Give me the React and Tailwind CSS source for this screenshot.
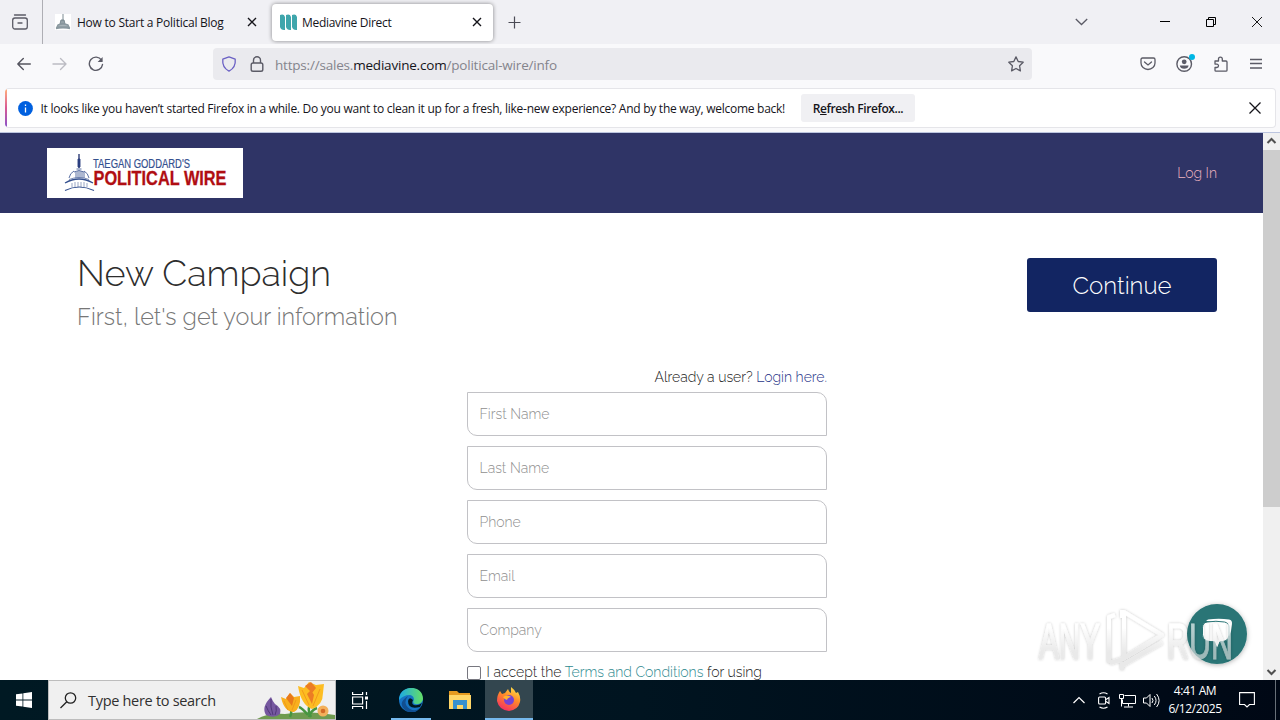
import React from "react";

const fields = ["First Name", "Last Name", "Phone", "Email", "Company"];

// capitol dome, used in the site logo
const Dome = () => (
  <g fill="none" stroke="#5a70a3" strokeWidth="1">
    <path d="M32 6V20" strokeWidth="1.300" stroke="#1d2c6b" />
    <path d="M31 11h2v8h-2z" fill="#2b3f80" strokeWidth="0.900" stroke="#2b3f80" />
    <path d="M29.500 21h5M27 24q5-3 10 0" />
    <path d="M29 24v6M31 23v7M33 23v7M35 23v7M37 24v6" strokeWidth="1" />
    <path d="M22 30q1-5 5-7M42 30q-1-5-5-7" />
    <path d="M18 35q14-8 28 0" stroke="#34508f" strokeWidth="1.300" />
    <path d="M22 31.500q10-4 20 0" strokeWidth="0.800" />
    <path d="M25 35v4M28 34v5M31 34v5M34 34v5M37 34v5M40 35v4" strokeWidth="0.900" stroke="#8c9bbd" />
    <path d="M18 42.500q14-7 29 0" stroke="#34508f" strokeWidth="1.200" />
  </g>
);

const SiteLogo = () => (
  <svg className="block h-[50px] w-[196px] bg-white" viewBox="0 0 196 50">
    <Dome />
    <text x="46" y="20" textLength="97" lengthAdjust="spacingAndGlyphs" fontFamily="Liberation Sans, sans-serif" fontSize="12.500" fill="#34508f" stroke="#34508f" strokeWidth="0.200">
      TAEGAN GODDARD'S
    </text>
    <text x="46.500" y="37" textLength="133" lengthAdjust="spacingAndGlyphs" fontFamily="Liberation Sans, sans-serif" fontSize="20" fontWeight="700" fill="#b00d12" stroke="#b00d12" strokeWidth="0.300">
      POLITICAL WIRE
    </text>
  </svg>
);

const TabBar = () => (
  <div className="flex h-11 items-center bg-[#f0f0f4]">
    <div className="flex h-full w-[43px] items-center justify-center border-r border-[#aeaeb4] pr-[2px]">
      <svg width="16" height="16" viewBox="0 0 16 16" fill="none" stroke="#5b5b66" strokeWidth="1.3" strokeLinecap="round">
        <path d="M2.500 1h11M6 9h4" />
        <rect x="0.700" y="4" width="14.600" height="11" rx="2.200" />
      </svg>
    </div>
    <div className="flex w-[229px] items-center pl-3">
      <svg width="16" height="16" viewBox="0 0 16 16" className="bg-white">
        <path d="M8 0v7M6 6h3l1 4H5z" stroke="#7c8b92" fill="#94a1a7" />
        <path d="M3 11q5-2 10 0l1 2H2zM1 14.500q7-2 14 0" stroke="#8a989f" strokeWidth="1.400" fill="#a9b4b9" />
      </svg>
      <span className="mt-[2px] ml-[6px] w-[170px] whitespace-nowrap text-[12px] tracking-[-0.24px]">How to Start a Political Blog</span>
      <svg width="10" height="10" viewBox="0 0 10 10" stroke="#15141a" strokeWidth="1.400">
        <path d="M1 1l8 8M9 1l-8 8" />
      </svg>
    </div>
    <div className="flex h-[37px] w-[221px] items-center rounded bg-white pl-2 shadow-[0_0_4px_rgba(0,0,0,0.45)]">
      <svg width="17" height="17" viewBox="0 0 17 17" fill="#3fa6ac">
        <path d="M0 1q4-1.500 5 2v13q-4 .5-5-3zM6 1q4-1.500 5 2v13q-4 .5-5-3zM12 1q4-1.500 5 2v13q-4 .5-5-3z" />
      </svg>
      <span className="mt-[2px] ml-[5px] w-[170px] whitespace-nowrap text-[12px] tracking-[-0.3px]">Mediavine Direct</span>
      <svg width="10" height="10" viewBox="0 0 10 10" stroke="#15141a" strokeWidth="1.400">
        <path d="M1 1l8 8M9 1l-8 8" />
      </svg>
    </div>
    <svg className="ml-[15px]" width="13" height="13" viewBox="0 0 13 13" stroke="#4b4b55" strokeWidth="1.200">
      <path d="M6.500 .5v12M.5 6.500h12" />
    </svg>
    <svg className="ml-auto" width="13" height="8" viewBox="0 0 13 8" fill="none" stroke="#5b5b66" strokeWidth="1.300">
      <path d="M.8 1l5.700 5.500L12.200 1" />
    </svg>
    <svg className="ml-[72px]" width="10" height="10" viewBox="0 0 10 10" stroke="#000">
      <path d="M0 4.500h10" />
    </svg>
    <svg className="ml-[36px]" width="10" height="10" viewBox="0 0 10 10" fill="none" stroke="#000">
      <path d="M.5 2.500h7v7h-7zM2.500 2.500v-2h7v7h-2" />
    </svg>
    <svg className="mr-[18px] ml-[36px]" width="10" height="10" viewBox="0 0 10 10" stroke="#000" strokeWidth="0.900">
      <path d="M0 0l10 10M10 0L0 10" />
    </svg>
  </div>
);

const Toolbar = () => (
  <div className="flex h-11 items-start bg-[#f9f9fb] pt-1">
    <div className="flex h-8 w-[213px] items-center gap-[21px] pl-[17px]">
      <svg width="14" height="14" viewBox="0 0 14 14" fill="none" stroke="#55555f" strokeWidth="1.400" strokeLinecap="round" strokeLinejoin="round">
        <path d="M13.300 7H.8M6.300 1.500L.8 7l5.500 5.500" />
      </svg>
      <svg width="15" height="14" viewBox="0 0 15 14" fill="none" stroke="#bcbcc3" strokeWidth="1.400" strokeLinecap="round" strokeLinejoin="round">
        <path d="M1 7h13M8.500 1.500L14 7l-5.500 5.500" />
      </svg>
      <svg width="16" height="16" viewBox="0 0 16 16" fill="none" stroke="#5b5b66" strokeWidth="1.400" strokeLinecap="round">
        <path d="M13.500 4.200A6.600 6.600 0 1 0 14.500 8.500" />
        <path d="M14.600 1v5h-5z" fill="#5b5b66" stroke="none" />
      </svg>
    </div>
    <div className="flex h-8 w-[819px] items-center rounded bg-[#eaeaee] pl-2">
      <svg width="16" height="16" viewBox="0 0 16 16" fill="none" stroke="#6a60c4" strokeWidth="1.300" strokeLinejoin="round">
        <path d="M8 .9l6.200 2.200q.9 8.300-6.200 12Q.9 11.400 1.800 3.100z" />
      </svg>
      <svg className="ml-3" width="16" height="16" viewBox="0 0 16 16" fill="none" stroke="#5b5b66" strokeWidth="1.400">
        <rect x="2.200" y="7" width="11.600" height="8.200" rx="1.800" />
        <path d="M4.500 7V4.300a3.500 3.500 0 0 1 7 0V7" />
      </svg>
      <span className="mt-[2px] ml-[10px] whitespace-nowrap text-[13.500px] tracking-[-0.2px] text-[#84848c]">
        https://sales.<span className="text-[#15141a]">mediavine.com</span>/political-wire/info
      </span>
      <svg className="mr-2 ml-auto" width="16" height="16" viewBox="0 0 16 16" fill="none" stroke="#5b5b66" strokeWidth="1.300" strokeLinejoin="round">
        <path d="M8 .9l2.200 4.600 5 .7-3.600 3.600.8 5.100L8 12.500l-4.400 2.400.8-5.100L.8 6.200l5-.7z" />
      </svg>
    </div>
    <div className="ml-auto flex h-8 items-center gap-5 pr-[17px]">
      <svg width="16" height="16" viewBox="0 0 16 16" fill="none" stroke="#5b5b66" strokeWidth="1.300" strokeLinecap="round">
        <path d="M2.500 2h11q1.500 0 1.500 1.500V7a7 6.500 0 0 1-14 0V3.500Q1 2 2.500 2z" />
        <path d="M4.500 6L8 9l3.500-3" />
      </svg>
      <svg className="-mr-[3px] mb-[2px]" width="20" height="20" viewBox="0 0 20 20">
        <circle cx="8.200" cy="11" r="7.300" fill="none" stroke="#5b5b66" strokeWidth="1.400" />
        <circle cx="8.200" cy="8.800" r="2.400" fill="#5b5b66" />
        <path d="M3.800 12.500h8.800q-.6 3.300-4.400 3.300t-4.400-3.300z" fill="#5b5b66" />
        <circle cx="16" cy="4" r="3" fill="#00b7e5" />
      </svg>
      <svg width="16" height="16" viewBox="0 0 16 16" fill="none" stroke="#5b5b66" strokeWidth="1.300" strokeLinejoin="round">
        <path d="M2 5h3.500V3a1.900 1.900 0 0 1 3.800 0v2h3.700q1 0 1 1v8.200q0 1-1 1H3q-1 0-1-1v-2.700h1.800a1.700 1.700 0 0 0 0-3.400H2z" />
      </svg>
      <svg width="14" height="12" viewBox="0 0 14 12" stroke="#5b5b66" strokeWidth="1.300">
        <path d="M1 1.500h12M1 5.500h12M1 10h12" />
      </svg>
    </div>
  </div>
);

const Notification = () => (
  <div className="h-[45px] border-b border-[#bcc5df] bg-[#f9f9fb] pr-1 pl-[5px]">
    <div className="flex h-10 overflow-hidden rounded border border-l-0 border-[#e5e5e9] bg-white">
      <div className="w-[2px] bg-linear-to-b from-[#ffae78] via-[#d85793] to-[#8a4fc8]" />
      <div className="flex flex-1 items-center pl-[11px]">
        <svg width="15" height="15" viewBox="0 0 15 15">
          <circle cx="7.500" cy="7.500" r="7.400" fill="#0060df" />
          <path d="M7.500 6.500v5M7.500 3.500v1.500" stroke="#fff" strokeWidth="1.300" />
        </svg>
        <span className="mt-px ml-[7.500px] w-[760.500px] whitespace-nowrap text-[12px] tracking-[-0.265px]">
          It looks like you haven’t started Firefox in a while. Do you want to clean it up for a fresh, like-new experience? And by the way, welcome back!
        </span>
        <button className="h-7 w-[114px] rounded-[3px] bg-[#f0f0f3] pt-px text-[12px] font-semibold tracking-[-0.4px] whitespace-nowrap">
          R<span className="underline">e</span>fresh Firefox...
        </button>
        <svg className="mr-[14px] ml-auto" width="12" height="12" viewBox="0 0 12 12" stroke="#15141a" strokeWidth="1.300">
          <path d="M.5 .5l11 11M11.500 .5l-11 11" />
        </svg>
      </div>
    </div>
  </div>
);

const Campaign = () => (
  <main className="h-[547px] w-[1263px] overflow-hidden bg-white font-['Raleway','Lato',sans-serif] font-light">
    <header className="flex h-20 items-center justify-between bg-[#2f3466] pr-[46px] pl-[47px]">
      <SiteLogo />
      <a className="text-[14px] text-[#f0b4c0]">Log In</a>
    </header>
    <section className="flex h-[154px] justify-between pr-[46px] pl-[77px]">
      <div className="pt-[36px]">
        <h1 className="text-[36px] leading-[48px] text-[#2d2d2d]">New Campaign</h1>
        <h2 className="text-[23.450px] leading-[39px] text-[#777]">First, let's get your information</h2>
      </div>
      <button className="mt-[45px] h-[54px] w-[190px] rounded-[3px] bg-[#122562] pt-[2px] text-[24px] text-white">
        Continue
      </button>
    </section>
    <form className="ml-[467px] w-[360px]">
      <p className="h-[25px] text-right text-[14px] leading-[20px] text-[#222]">
        Already a user? <a className="text-[#1f3487]">Login here.</a>
      </p>
      {fields.map((field) => (
        <input
          key={field}
          placeholder={field}
          className="mb-[10px] block h-11 w-full rounded-tr-[10px] rounded-bl-[10px] border border-[#c2c2c6] px-[11.500px] text-[14px] placeholder:text-[#8f8f8f]"
        />
      ))}
      <label className="flex h-5 items-center whitespace-nowrap text-[14px] text-[#222]">
        <span className="mt-px mr-[5.500px] h-[14px] w-[14px] rounded-[2px] border border-[#77777f]" />
        <span>
          I accept the <a className="text-[#2f8a90]">Terms and Conditions</a> for using
        </span>
      </label>
    </form>
  </main>
);

const Scrollbar = () => (
  <div className="flex w-[17px] flex-col items-center justify-between bg-[#f0f0f0]">
    <svg width="17" height="17" viewBox="0 0 17 17" fill="none" stroke="#505050" strokeWidth="2">
      <path d="M4.500 10l4-4 4 4" />
    </svg>
    <div className="mb-auto h-[357px] w-full bg-[#cdcdcd]" />
    <svg width="17" height="17" viewBox="0 0 17 17" fill="none" stroke="#505050" strokeWidth="2">
      <path d="M4.500 7l4 4 4-4" />
    </svg>
  </div>
);

// chat bubble and the watermark lying over the page
const Overlay = () => (
  <div className="pointer-events-none absolute top-[596px] left-[1030px]">
    <svg width="233" height="84" viewBox="0 0 233 84">
      <defs>
        <filter id="soft" x="-30%" y="-30%" width="160%" height="160%">
          <feDropShadow dx="0" dy="1" stdDeviation="2.500" floodOpacity="0.3" />
        </filter>
        <filter id="edge" x="-10%" y="-20%" width="120%" height="140%">
          <feDropShadow dx="0" dy="0" stdDeviation="1.600" floodColor="#000" floodOpacity="0.35" />
        </filter>
        <linearGradient id="fade" gradientUnits="userSpaceOnUse" x1="0" y1="14" x2="0" y2="74">
          <stop offset="0.300" stopColor="#fff" />
          <stop offset="0.700" stopColor="#dedede" />
        </linearGradient>
      </defs>
      <circle cx="187" cy="38" r="30" fill="#2a7576" filter="url(#soft)" />
      <path d="M178 23.500q11-1.500 21 0 3.500.5 3 5-.3 6-3 12l-4 3V28q-7-3-19-3z" fill="#fff" />
      <path d="M177 26q9-1.500 17.500 0 4.500 1 4.500 5v8q0 5-4 6-2.500.7-5 .8L187 53l-2.500-7.200q-5 0-8-1-4-1.300-4-6v-7q0-5 4.500-5.800z" fill="#fff" stroke="#2a7576" strokeWidth="1" />
      <g filter="url(#edge)" opacity="0.65">
        <g fill="url(#fade)" stroke="url(#fade)" strokeWidth="0.900" fontFamily="Liberation Sans, sans-serif" fontSize="50" fontWeight="400">
          <text x="9" y="62.500" textLength="61" lengthAdjust="spacingAndGlyphs">ANY</text>
          <text x="137" y="62.500" textLength="66" lengthAdjust="spacingAndGlyphs">RUN</text>
        </g>
        <g fill="none" stroke="url(#fade)" strokeWidth="4" strokeLinejoin="round">
          <path d="M85 19l-6 2v46M92 69.500l40-23" />
          <path d="M94 16v46l38-23z" />
          <path d="M80 67l10-3 4-2M92 14v8M92 66v8" />
        </g>
      </g>
    </svg>
  </div>
);

const Flowers = () => (
  <svg className="ml-auto" width="80" height="38" viewBox="0 0 80 38">
    <path d="M2 38q10-6 28-5 22-4 50 1v4z" fill="#6f9b50" />
    <path d="M35 36q3-6-1-12M56 36q-5-8 1-16M53 34q-6-7-9-8M62 27q-6 2-8 9" stroke="#479640" strokeWidth="2.500" fill="none" />
    <path d="M16 16q-10 10-5 18 8 4 14-1 2-6-5-10-2-2-4-7z" fill="#7658a0" />
    <path d="M16 18q-1 8 2 16M11 25q2 5 5 9M21 25q1 5-1 9" stroke="#503779" fill="none" />
    <path d="M26 16l5 2 4-6 4 4 6-1q1 12-6 16-10 0-13-15z" fill="#f9b01d" />
    <path d="M31 17l4-5 4 5-2 8z" fill="#e8791b" />
    <path d="M33 29l-4-9M37 29l4-10" stroke="#f09a18" fill="none" />
    <path d="M43 5l6 2 5-6 7 3 8-1-1 9q0 12-11 16-11-4-14-23z" fill="#fdbd22" />
    <path d="M50 5l6-4 5 6-4 5zM52 13l4-4 3 5-2 9z" fill="#ec7d24" />
    <path d="M65 8l-7 17M47 9l7 15" stroke="#f29a1c" fill="none" />
    <circle cx="68" cy="30" r="5.500" fill="#f3b05b" />
    <circle cx="68" cy="30" r="2.300" fill="#d46b26" />
  </svg>
);

const Taskbar = () => (
  <footer className="flex h-10 items-stretch bg-linear-to-r from-[#001923] via-[#001420] to-[#000815] text-white">
    <div className="flex w-12 items-center justify-center">
      <svg width="16" height="16" viewBox="0 0 16 16" fill="#fff">
        <path d="M0 2.300L6.500 1.400v6.200H0zM7.300 1.300L16 0v7.600H7.300zM0 8.400h6.500v6.200L0 13.700zM7.300 8.400H16V16l-8.700-1.300z" />
      </svg>
    </div>
    <div className="flex w-72 items-center overflow-hidden border border-[#bdbdbd] bg-[#f0f0f0] pl-[11px] text-[#303030]">
      <svg width="17" height="17" viewBox="0 0 17 17" fill="none" stroke="#222" strokeWidth="1.300">
        <circle cx="10.500" cy="6" r="5.200" />
        <path d="M6.800 9.700L.5 16" />
      </svg>
      <span className="mt-[2px] ml-[11px] text-[14.500px] tracking-[-0.3px] whitespace-nowrap">Type here to search</span>
      <Flowers />
    </div>
    <div className="flex w-[55px] items-center pl-4">
      <svg width="17" height="17" viewBox="0 0 17 17" fill="none" stroke="#fff" strokeWidth="1.200">
        <path d="M.6 0v2.500h10V0M.6 17v-2.500h10V17M.6 5h10v7H.6zM14.500 0v3M14.500 9v8" />
        <path d="M13 4.500h3v3h-3z" fill="#fff" stroke="none" />
      </svg>
    </div>
    <div className="flex w-10 items-center justify-center border-b-2 border-[#76b9ed] pt-[2px]">
      <svg width="24" height="24" viewBox="0 0 24 24">
        <defs>
          <linearGradient id="edgeTop" x1="0" x2="1">
            <stop offset="0" stopColor="#1ca9e5" />
            <stop offset="1" stopColor="#65df65" />
          </linearGradient>
        </defs>
        <circle cx="12" cy="12" r="12" fill="#1674c5" />
        <path d="M0 12C0-4 24-4 24 11q-1 6-8 5-3-1-1-4c0-7-9-6-15 0z" fill="url(#edgeTop)" />
        <path d="M9 8q-6 8 2 13 5 3 10-1Q15 28 6 22-2 15 9 8z" fill="#114f91" />
        <path d="M14 12q-2 4 1 5 4 1 8-2l-2 4q-12 3-12-6 1-5 5-1z" fill="#001720" />
      </svg>
    </div>
    <div className="flex w-[54px] items-center justify-center pl-1">
      <svg width="22" height="19" viewBox="0 0 22 19">
        <path d="M0 0h8l2 2h11v4H0z" fill="#e59a20" />
        <path d="M0 4h22v14H0z" fill="#ffd668" />
        <path d="M4 18V9h14v9h-4v-4H8v4z" fill="#3890cf" />
      </svg>
    </div>
    <div className="mr-auto flex w-12 items-center justify-center border-b-2 border-[#76b9ed] bg-[#33464f]">
      <svg width="24" height="24" viewBox="0 0 24 24">
        <defs>
          <linearGradient id="fire" x1="0.800" y1="0" x2="0.300" y2="1">
            <stop offset="0" stopColor="#ffe64a" />
            <stop offset="0.450" stopColor="#ff8a28" />
            <stop offset="1" stopColor="#f52b66" />
          </linearGradient>
        </defs>
        <path d="M3 4l2 3 3-1 3-4q1 3 3 4V0q4 3 5 6l2-1q3 5 2 10-2 8-11 9-10-1-12-10Q0 8 3 4z" fill="url(#fire)" />
        <circle cx="12" cy="13" r="5" fill="#7542d5" />
        <path d="M6 10q4-3 8 0-4 1-4 3-2 0-4-3z" fill="#ffb22e" />
      </svg>
    </div>
    <div className="flex items-center">
      <svg width="12" height="8" viewBox="0 0 12 8" fill="none" stroke="#fff" strokeWidth="1.200">
        <path d="M.5 7L6 1.500 11.500 7" />
      </svg>
      <svg className="ml-[13px]" width="12" height="17" viewBox="0 0 12 17" fill="none" stroke="#fff" strokeWidth="1.100">
        <rect x="0.600" y="5" width="7" height="7" rx="1" />
        <path d="M8 7.500l3-2v6l-3-2M1.500 2Q5.500-.5 9.500 2M1.500 15q4 2.500 8 0" />
      </svg>
      <svg className="ml-[9px]" width="17" height="15" viewBox="0 0 17 15" fill="none" stroke="#fff">
        <path d="M5.500 2.500h11v8h-13v-4M9.500 10.500v3M5 14h9M.5 1.500h4v4h-4zM2.500 5.500v8" />
      </svg>
      <svg className="ml-[7px]" width="17" height="15" viewBox="0 0 17 15" fill="none" stroke="#fff">
        <path d="M.5 5h3L7 1.500v12L3.500 10h-3zM9 5q2 2.500 0 5M11.300 3q3.500 4.500 0 9M13.600 1q5 6.500 0 13" />
      </svg>
      <div className="ml-[6px] w-[58px] text-center text-[12px] leading-[18px] tracking-[-0.4px] whitespace-nowrap">
        <div>4:41 AM</div>
        <div>6/12/2025</div>
      </div>
      <svg className="ml-[15px]" width="16" height="16" viewBox="0 0 16 16" fill="none" stroke="#fff" strokeWidth="1.100">
        <path d="M.6 .6h14.800v11.900h-4.900L8 15l-2.500-2.500H.6z" />
      </svg>
      <div className="ml-5 h-full w-[5px] border-l border-[#687078]" />
    </div>
  </footer>
);

const App = () => {
  return (
    <div className="relative flex h-[720px] w-[1280px] flex-col overflow-hidden bg-white font-['Segoe_UI','Open_Sans',sans-serif] text-[#15141a]">
      <TabBar />
      <Toolbar />
      <Notification />
      <div className="flex h-[547px]">
        <Campaign />
        <Scrollbar />
      </div>
      <Taskbar />
      <Overlay />
    </div>
  );
};

export default App;
